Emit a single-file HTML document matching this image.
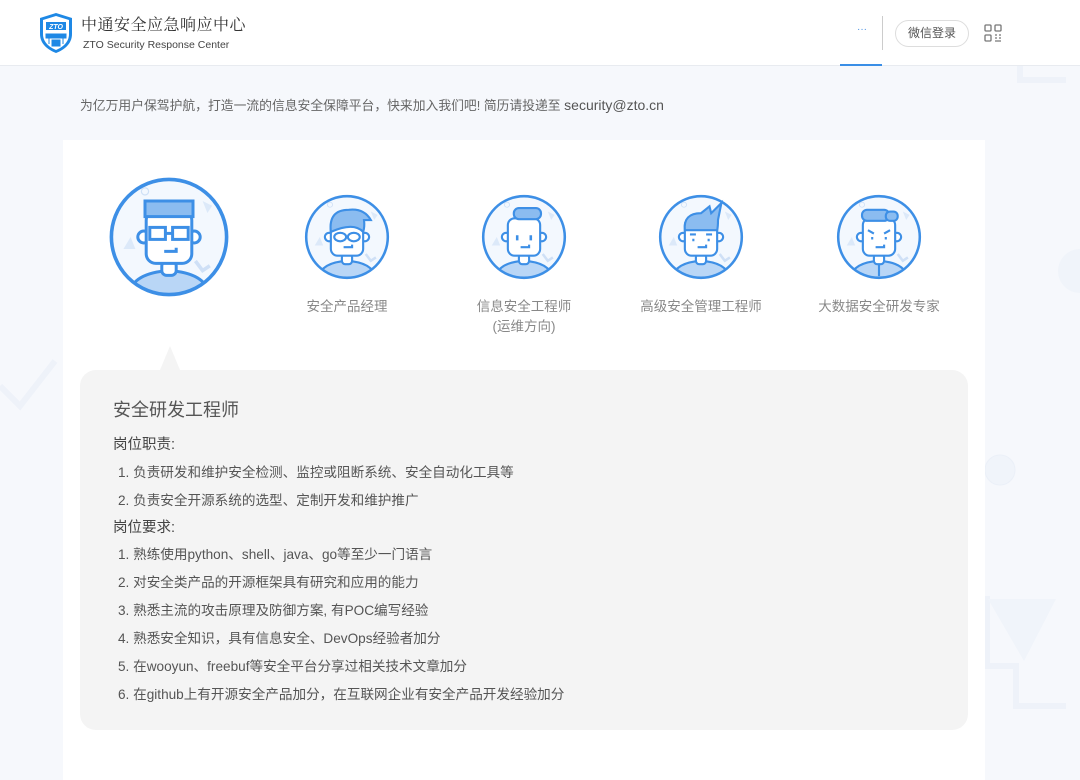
<!DOCTYPE html>
<html><head><meta charset="utf-8">
<style>
*{margin:0;padding:0;box-sizing:border-box}
body{width:1080px;height:761px;overflow:hidden;background:#f6f8fc;font-family:"Liberation Sans","Noto Sans CJK SC",sans-serif;position:relative}
.hdr{position:absolute;left:0;top:0;width:1080px;height:66px;background:#fff;border-bottom:1px solid #e8ebf0}
.t1{position:absolute;left:81px;top:12px;font-family:"Noto Serif CJK SC",serif;font-size:16px;color:#333;letter-spacing:0.5px}
.t2{position:absolute;left:83px;top:39px;font-size:10.5px;color:#444}
.dots{position:absolute;left:857px;top:24px;font-size:10px;color:#4a90e2}
.uline{position:absolute;left:840px;top:64px;width:42px;height:2px;background:#3a8ee6}
.vsep{position:absolute;left:882px;top:16px;width:1px;height:34px;background:#ccc}
.btn{position:absolute;left:895px;top:20px;width:74px;height:27px;border:1px solid #ddd;border-radius:14px;font-size:12px;color:#555;text-align:center;line-height:25px}
.intro{position:absolute;left:80px;top:95px;font-size:12.8px;color:#666}
.intro span{font-size:14px;color:#555}
.card{position:absolute;left:63px;top:140px;width:922px;height:640px;background:#fff}
.lab{position:absolute;font-size:13.5px;color:#888;text-align:center;width:160px;line-height:20px}
.box{position:absolute;left:80px;top:370px;width:888px;height:360px;background:#f4f4f4;border-radius:16px}
.ptr{position:absolute;left:160px;top:346px;width:0;height:0;border-left:10px solid transparent;border-right:10px solid transparent;border-bottom:24px solid #f4f4f4}
.tt{position:absolute;left:113px;top:396px;font-size:18px;color:#555}
.h{position:absolute;left:113px;font-size:14.5px;color:#444}
.it{position:absolute;left:118px;font-size:13.6px;color:#555}
</style></head><body>
<svg style="position:absolute;left:0;top:66px" width="1080" height="695">
<g fill="none" stroke="#eef2f9" stroke-width="6">
<path d="M1020 0 V14 H1066"/><path d="M987 530 V600 H1016 V640 H1066"/>
<path d="M0 320 L20 340 L55 295"/>
</g>
<circle cx="1080" cy="205" r="22" fill="#f0f4fa"/>
<circle cx="1000" cy="404" r="15" fill="#f0f4fa" stroke="#ebf0f8"/>
<path d="M988 533 L1056 533 L1024 595Z" fill="#f0f4fa"/>
</svg>
<div class="hdr">
<svg style="position:absolute;left:38px;top:12px" width="36" height="42" viewBox="0 0 36 42">
<path d="M18 1 L34 6 V22 C34 32 26 38 18 41 C10 38 2 32 2 22 V6Z" fill="#1e88e5"/>
<path d="M18 4 L31 8 V22 C31 30 25 35 18 38 C11 35 5 30 5 22 V8Z" fill="#fff"/>
<path d="M8 10 H28 V18 H8Z" fill="#1e88e5"/>
<text x="18" y="17" font-size="7" font-weight="bold" font-style="italic" fill="#fff" text-anchor="middle" font-family="Liberation Sans">ZTO</text>
<path d="M8 22 H28 V26 H8Z M11 26 V32 M25 26 V32 M14 28 H22 V34 H14Z" fill="#1e88e5" stroke="#1e88e5"/>
</svg>
<div class="t1">中通安全应急响应中心</div>
<div class="t2">ZTO Security Response Center</div>
<div class="dots">···</div>
<div class="uline"></div>
<div class="vsep"></div>
<div class="btn">微信登录</div>
<svg style="position:absolute;left:984px;top:24px" width="18" height="18" viewBox="0 0 18 18" fill="none" stroke="#777" stroke-width="1.3"><rect x="1" y="1" width="6" height="6" rx="1"/><rect x="11" y="1" width="6" height="6" rx="1"/><rect x="1" y="11" width="6" height="6" rx="1"/><path d="M11 11h2M15 11h2M11 14h2M15 14h2M11 17h6"/></svg>
</div>
<div class="intro">为亿万用户保驾护航，打造一流的信息安全保障平台，快来加入我们吧! 简历请投递至 <span>security@zto.cn</span></div>
<div class="card"></div>
<svg style="position:absolute;left:0;top:0" width="1080" height="340">
<defs>
<clipPath id="cc"><circle cx="0" cy="0" r="47"/></clipPath>
<g id="av">
<circle cx="0" cy="0" r="48" fill="#f3f8fe"/>
<g clip-path="url(#cc)">
<path d="M-38 10 l6 -10 l4 10z" fill="#dce9f9"/>
<path d="M28 -30 l8 4 l-4 6z" fill="#dce9f9"/>
<circle cx="-20" cy="-38" r="3" fill="none" stroke="#cfe0f6"/>
<path d="M22 20 l6 8 l6 -4" fill="none" stroke="#cfe0f6" stroke-width="3"/>
<path d="M-34 50 Q-32 30 0 28 Q32 30 34 50Z" fill="#b9d6f6" stroke="#3d8fe6" stroke-width="2.5"/>
<rect x="-6" y="20" width="12" height="12" rx="4" fill="#fff" stroke="#3d8fe6" stroke-width="2.5"/>
<circle cx="-21" cy="0" r="5" fill="#fff" stroke="#3d8fe6" stroke-width="2.5"/>
<circle cx="21" cy="0" r="5" fill="#fff" stroke="#3d8fe6" stroke-width="2.5"/>
<rect x="-19" y="-22" width="38" height="44" rx="8" fill="#fff" stroke="#3d8fe6" stroke-width="2.5"/>
<path d="M-4 12 H6 V9" fill="none" stroke="#3d8fe6" stroke-width="2.5"/>
</g>
<circle cx="0" cy="0" r="48" fill="none" stroke="#3d8fe6" stroke-width="3"/>
</g>
</defs>
<g transform="translate(169,237) scale(1.2)">
<use href="#av"/>
<rect x="-20" y="-30" width="40" height="13" fill="#8bbcf0" stroke="#3d8fe6" stroke-width="2.5"/>
<g fill="none" stroke="#3d8fe6" stroke-width="2.5"><rect x="-16" y="-8" width="13" height="10"/><rect x="3" y="-8" width="13" height="10"/><path d="M-3 -3 H3"/></g>
</g>
<g transform="translate(347,237) scale(0.85)">
<use href="#av"/>
<path d="M-19 -6 Q-22 -32 2 -32 Q20 -34 28 -20 L20 -20 Q21 -12 19 -6 Q8 -18 -19 -6Z" fill="#8bbcf0" stroke="#3d8fe6" stroke-width="2.5"/>
<g fill="none" stroke="#3d8fe6" stroke-width="2.5"><ellipse cx="-8" cy="0" rx="7" ry="5"/><ellipse cx="8" cy="0" rx="7" ry="5"/></g>
</g>
<g transform="translate(524,237) scale(0.85)">
<use href="#av"/>
<rect x="-12" y="-34" width="32" height="13" rx="6" fill="#8bbcf0" stroke="#3d8fe6" stroke-width="2.5"/>
<g stroke="#3d8fe6" stroke-width="3"><path d="M-8 -2v6M8 -2v6"/></g>
</g>
<g transform="translate(701,237) scale(0.85)">
<use href="#av"/>
<path d="M-19 -8 Q-21 -28 0 -28 L10 -36 L12 -28 L24 -40 L20 -20 Q20 -12 19 -8 Z" fill="#8bbcf0" stroke="#3d8fe6" stroke-width="2.5"/>
<g stroke="#3d8fe6" stroke-width="2.5"><path d="M-13 -3h7M6 -3h7M-9 2v3M9 2v3"/></g>
</g>
<g transform="translate(879,237) scale(0.85)">
<use href="#av"/>
<rect x="-20" y="-32" width="32" height="13" rx="6" fill="#8bbcf0" stroke="#3d8fe6" stroke-width="2.5"/>
<rect x="8" y="-30" width="14" height="11" rx="5" fill="#8bbcf0" stroke="#3d8fe6" stroke-width="2.5"/>
<g stroke="#3d8fe6" stroke-width="2.5"><path d="M-13 -8l7 4M13 -8l-7 4M-8 0v3M8 0v3M0 32v14"/></g>
</g>
</svg>
<div class="lab" style="left:267px;top:297px">安全产品经理</div>
<div class="lab" style="left:444px;top:297px">信息安全工程师<br>(运维方向)</div>
<div class="lab" style="left:621px;top:297px">高级安全管理工程师</div>
<div class="lab" style="left:799px;top:297px">大数据安全研发专家</div>
<div class="ptr"></div>
<div class="box"></div>
<div class="tt">安全研发工程师</div>
<div class="h" style="top:433px">岗位职责:</div>
<div class="it" style="top:461px">1. 负责研发和维护安全检测、监控或阻断系统、安全自动化工具等</div>
<div class="it" style="top:489px">2. 负责安全开源系统的选型、定制开发和维护推广</div>
<div class="h" style="top:516px">岗位要求:</div>
<div class="it" style="top:543px">1. 熟练使用python、shell、java、go等至少一门语言</div>
<div class="it" style="top:571px">2. 对安全类产品的开源框架具有研究和应用的能力</div>
<div class="it" style="top:599px">3. 熟悉主流的攻击原理及防御方案, 有POC编写经验</div>
<div class="it" style="top:627px">4. 熟悉安全知识，具有信息安全、DevOps经验者加分</div>
<div class="it" style="top:655px">5. 在wooyun、freebuf等安全平台分享过相关技术文章加分</div>
<div class="it" style="top:683px">6. 在github上有开源安全产品加分，在互联网企业有安全产品开发经验加分</div>
</body></html>
